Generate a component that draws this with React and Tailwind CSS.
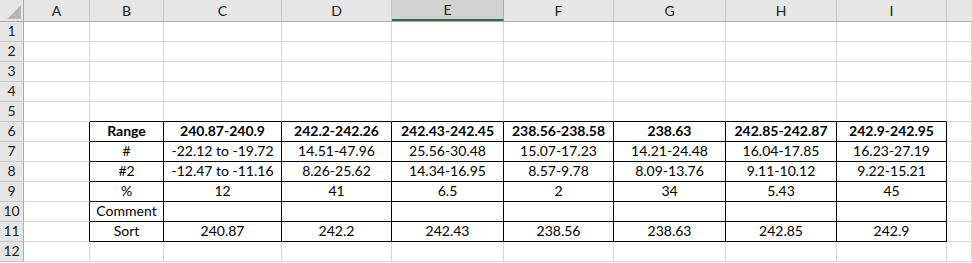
const widths = ['w-[24px]', 'w-[66px]', 'w-[74px]', 'w-[118px]', 'w-[110px]', 'w-[112px]', 'w-[110px]', 'w-[112px]', 'w-[111px]', 'w-[110px]', 'flex-1']
const letters = ['A', 'B', 'C', 'D', 'E', 'F', 'G', 'H', 'I', '']

const table = {
  6: ['Range', '240.87-240.9', '242.2-242.26', '242.43-242.45', '238.56-238.58', '238.63', '242.85-242.87', '242.9-242.95'],
  7: ['#', '-22.12 to -19.72', '14.51-47.96', '25.56-30.48', '15.07-17.23', '14.21-24.48', '16.04-17.85', '16.23-27.19'],
  8: ['#2', '-12.47 to -11.16', '8.26-25.62', '14.34-16.95', '8.57-9.78', '8.09-13.76', '9.11-10.12', '9.22-15.21'],
  9: ['%', '12', '41', '6.5', '2', '34', '5.43', '45'],
  10: ['Comment', '', '', '', '', '', '', ''],
  11: ['Sort', '240.87', '242.2', '242.43', '238.56', '238.63', '242.85', '242.9'],
}

// table covers rows 6-11, columns B (1) to I (8)
const inTable = (r, c) => r >= 6 && r <= 11 && c >= 1 && c <= 8

function Cell({ r, c }) {
  const right = inTable(r, c) || inTable(r, c + 1) ? 'border-r-black' : 'border-r-[#d4d4d4]'
  const bottom = inTable(r, c) || inTable(r + 1, c) ? 'border-b-black' : 'border-b-[#d4d4d4]'
  const text = inTable(r, c) ? table[r][c - 1] : ''
  const bold = r === 6 ? 'font-bold' : ''
  return (
    <div className={`${widths[c + 1]} h-[20px] shrink-0 border-r border-b ${right} ${bottom} flex items-end justify-center pb-[1px] whitespace-nowrap overflow-hidden ${bold}`}>
      {text}
    </div>
  )
}

export default function App() {
  const rows = Array.from({ length: 12 }, (_, i) => i + 1)
  return (
    <div className="w-[972px] h-[263px] bg-white overflow-hidden text-[14px] leading-[18px] text-black" style={{ fontFamily: 'Lato, "Open Sans", sans-serif' }}>
      {/* Column headers */}
      <div className="flex h-[22px] bg-[#e6e6e6] border-b border-[#ababab]">
        <div className="w-[24px] shrink-0 border-r border-[#ababab] relative">
          <svg className="absolute left-[7px] top-[5px]" width="14" height="14" viewBox="0 0 14 14">
            <polygon points="14,0 14,14 0,14" fill="#b7b7b7" />
          </svg>
        </div>
        {letters.map((l, i) => (
          <div
            key={i}
            className={`${widths[i + 1]} shrink-0 flex items-center justify-center text-[#222] ${i < 9 ? 'border-r border-[#c6c6c6]' : ''} ${l === 'E' ? 'bg-[#d2d2d2] border-b-2 border-b-[#217346] border-r-[#ababab]' : ''}`}
          >
            {l}
          </div>
        ))}
      </div>
      {/* Rows */}
      {rows.map((r) => (
        <div key={r} className="flex">
          <div className="w-[24px] h-[20px] shrink-0 bg-[#e6e6e6] border-r border-b border-r-[#ababab] border-b-[#c6c6c6] flex items-end justify-center pb-[1px] text-[#222]">
            {r}
          </div>
          {letters.map((_, c) => (
            <Cell key={c} r={r} c={c} />
          ))}
        </div>
      ))}
    </div>
  )
}
